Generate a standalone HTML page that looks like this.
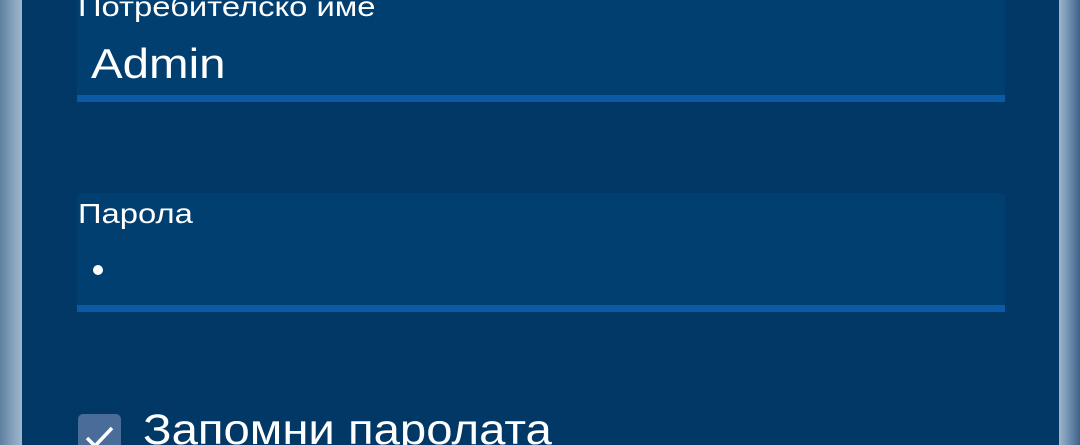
<!DOCTYPE html>
<html><head><meta charset="utf-8"><style>
html,body{margin:0;padding:0;width:1080px;height:445px;overflow:hidden;background:#023866;font-family:"Liberation Sans",sans-serif;color:#fff}
.w{position:relative;width:1080px;height:445px;overflow:hidden}
.l{position:absolute;left:0;top:0;width:22px;height:445px;background:linear-gradient(90deg,#5f7f9e,#86a3be 60%,#9fb6cc)}
.r{position:absolute;left:1059px;top:0;width:21px;height:445px;background:linear-gradient(90deg,#9fb6cc,#6d8cac 50%,#3d6189)}
.p{position:absolute;left:22px;top:0;width:1037px;height:445px;background:#023866}
.f{position:absolute;left:77px;width:928px;background:#023f71;border-radius:4px 4px 0 0}
.line{position:absolute;left:0;bottom:0;width:100%;height:7px;background:#0c5aa6}
.lab{position:absolute;left:1px;font-size:28px;transform:scaleX(1.17);transform-origin:left;white-space:nowrap}
.cb{position:absolute;left:78px;top:414px;width:43px;height:43px;background:#4a6c99;border-radius:5px}
</style></head><body><div class="w">
<div class="l"></div><div class="p"></div><div class="r"></div>
<div class="f" style="top:-10px;height:112px">
 <div class="lab" style="top:1px">Потребителско име</div>
 <div style="position:absolute;left:14px;top:50px;font-size:42px;transform:scaleX(1.13);transform-origin:left">Admin</div>
 <div class="line"></div></div>
<div class="f" style="top:193px;height:119px">
 <div class="lab" style="top:5px">Парола</div>
 <div style="position:absolute;left:16px;top:72px;width:10px;height:10px;border-radius:50%;background:#fff"></div>
 <div class="line"></div></div>
<div class="cb"><svg width="43" height="43" viewBox="0 0 43 43"><path d="M9 24 L17 32 L34 14" stroke="#fff" stroke-width="3.5" fill="none"/></svg></div>
<div style="position:absolute;left:143px;top:406px;font-size:43px;white-space:nowrap;transform:scaleX(1.1);transform-origin:left">Запомни паролата</div>
</div></body></html>
